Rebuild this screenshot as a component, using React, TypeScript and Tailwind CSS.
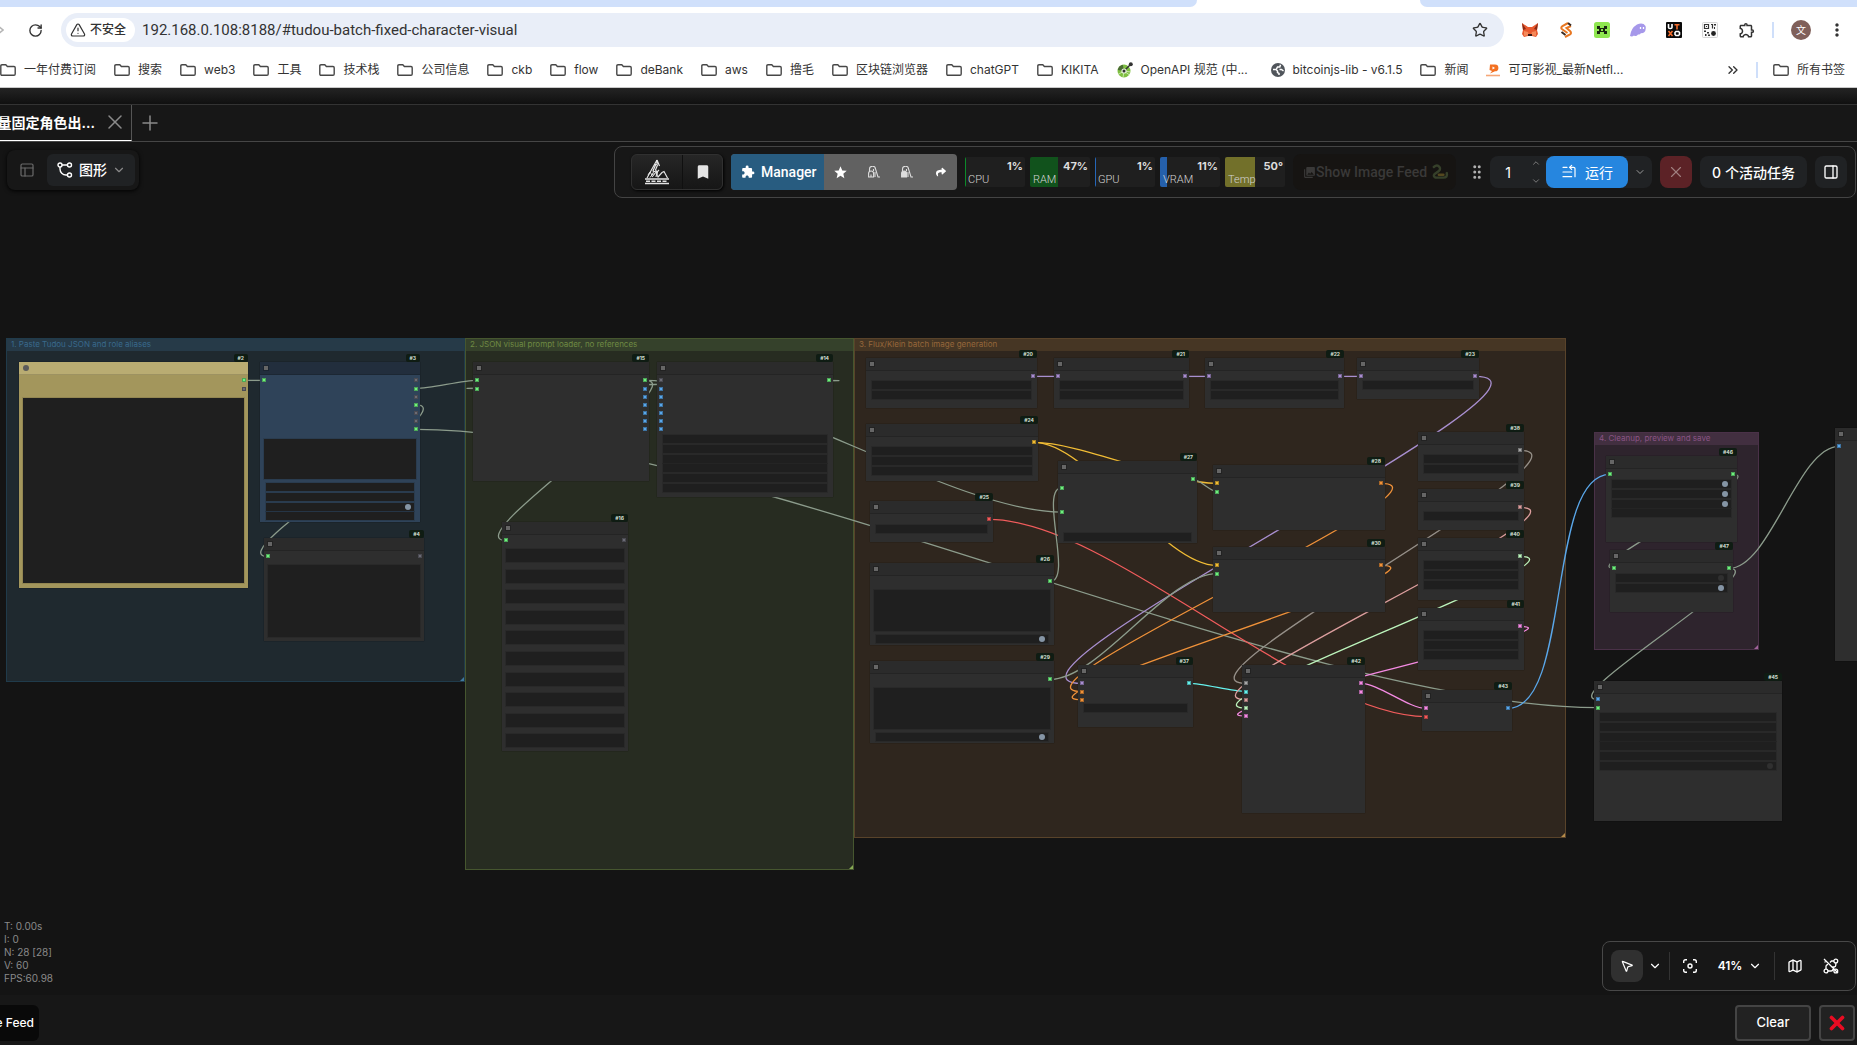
import type { ReactNode } from "react";
import {
  ChevronDown,
  ChevronUp,
  ChevronsRight,
  GripVertical,
  ListStart,
  Map as MapIcon,
  MousePointer2,
  PanelRight,
  PanelsTopLeft,
  Plus,
  RotateCw,
  Star,
  TriangleAlert,
  X,
} from "lucide-react";
import {
  MdBookmark,
  MdExtension,
  MdMoreVert,
  MdOutlineExtension,
  MdPhotoLibrary,
  MdStar,
} from "react-icons/md";
import { FaShare } from "react-icons/fa";

/* ---------- graph data ---------- */

// canvas coordinates are window coordinates, the canvas itself starts below the tabs
const ORIGIN_Y = 142;
const SLOT_PITCH = 8.17;
const WIDGET_PITCH = 9.8;
const TITLE_HEIGHT = 12;

const GREEN = "#6ff07f";
const GRAY = "#6b6b75";
const BLUE = "#5aa7ea";
const PURPLE = "#a98fd0";
const YELLOW = "#f2bd35";
const ORANGE = "#f0923a";
const RED = "#f25c5c";
const SIGMA = "#a8a8a8";
const PINK = "#dd9f9f";
const MINT = "#bdf5bd";
const MAGENTA = "#f58be4";
const CYAN = "#66f2ee";
const STRING_LINK = "#8c9c8c";

type Slot = string | null;

type GraphNode = {
  id: number;
  x: number;
  y: number;
  w: number;
  h: number;
  inputs?: Slot[];
  outputs?: Slot[];
  widgets?: number;
  widgetsTop?: number;
  toggles?: Record<number, boolean>;
  areas?: { top: number; height: number }[];
  theme?: "default" | "blue" | "yellow";
  hideBadge?: boolean;
};

const nodes: GraphNode[] = [
  { id: 2, x: 19, y: 362, w: 229, h: 226, outputs: [GREEN, GRAY], areas: [{ top: 36, height: 185 }], theme: "yellow" },
  {
    id: 3, x: 260, y: 362, w: 160, h: 160, inputs: [GREEN],
    outputs: [GRAY, GREEN, GRAY, GREEN, GRAY, GRAY, GREEN],
    areas: [{ top: 77, height: 40 }], widgets: 4, widgetsTop: 121, toggles: { 2: true }, theme: "blue",
  },
  { id: 4, x: 264, y: 538, w: 160, h: 103, inputs: [GREEN], outputs: [GRAY], areas: [{ top: 27, height: 72 }] },
  { id: 15, x: 473, y: 362, w: 176, h: 119, inputs: [GREEN, GREEN], outputs: [GREEN, BLUE, BLUE, BLUE, BLUE, BLUE, BLUE] },
  { id: 14, x: 657, y: 362, w: 176, h: 135, inputs: [GRAY, BLUE, BLUE, BLUE, BLUE, BLUE, BLUE], outputs: [GREEN], widgets: 6, widgetsTop: 73 },
  {
    id: 16, x: 502, y: 522, w: 126, h: 229, inputs: [GREEN], outputs: [GRAY],
    areas: Array.from({ length: 10 }, (_, i) => ({ top: Math.round(27 + i * 20.6), height: 13 })),
  },
  { id: 20, x: 866, y: 358, w: 171, h: 50, outputs: [PURPLE], widgets: 2 },
  { id: 21, x: 1054, y: 358, w: 135, h: 50, inputs: [PURPLE], outputs: [PURPLE], widgets: 2 },
  { id: 22, x: 1205, y: 358, w: 139, h: 50, inputs: [PURPLE], outputs: [PURPLE], widgets: 2 },
  { id: 23, x: 1357, y: 358, w: 122, h: 41, inputs: [PURPLE], outputs: [PURPLE], widgets: 1 },
  { id: 24, x: 866, y: 424, w: 172, h: 57, outputs: [YELLOW], widgets: 3 },
  { id: 25, x: 870, y: 501, w: 123, h: 41, outputs: [RED], widgets: 1, widgetsTop: 24 },
  { id: 26, x: 870, y: 563, w: 184, h: 82, outputs: [GREEN], areas: [{ top: 27, height: 41 }], widgets: 1, widgetsTop: 72, toggles: { 0: true } },
  { id: 29, x: 870, y: 661, w: 184, h: 82, outputs: [GREEN], areas: [{ top: 27, height: 41 }], widgets: 1, widgetsTop: 72, toggles: { 0: true } },
  { id: 27, x: 1058, y: 461, w: 139, h: 82, inputs: [null, GREEN, null, null, GREEN], outputs: [GREEN], widgets: 1, widgetsTop: 72 },
  { id: 37, x: 1078, y: 665, w: 115, h: 62, inputs: [PURPLE, ORANGE, ORANGE], outputs: [CYAN], widgets: 1, widgetsTop: 39 },
  { id: 28, x: 1213, y: 465, w: 172, h: 65, inputs: [YELLOW, GREEN], outputs: [ORANGE] },
  { id: 30, x: 1213, y: 547, w: 172, h: 65, inputs: [YELLOW, GREEN], outputs: [ORANGE] },
  { id: 38, x: 1418, y: 432, w: 106, h: 49, outputs: [SIGMA], widgets: 2 },
  { id: 39, x: 1418, y: 489, w: 106, h: 41, outputs: [PINK], widgets: 1 },
  { id: 40, x: 1418, y: 538, w: 106, h: 62, outputs: [MINT], widgets: 3 },
  { id: 41, x: 1418, y: 608, w: 106, h: 62, outputs: [MAGENTA], widgets: 3 },
  { id: 42, x: 1242, y: 665, w: 123, h: 148, inputs: [SIGMA, CYAN, PINK, MINT, MAGENTA], outputs: [MAGENTA, MAGENTA] },
  { id: 43, x: 1422, y: 690, w: 90, h: 41, inputs: [MAGENTA, RED], outputs: [BLUE] },
  { id: 46, x: 1606, y: 456, w: 131, h: 86, inputs: [GREEN], outputs: [GREEN], widgets: 4, widgetsTop: 24, toggles: { 0: true, 1: true, 2: true } },
  { id: 47, x: 1610, y: 550, w: 123, h: 62, inputs: [GREEN], outputs: [GREEN], widgets: 2, widgetsTop: 24, toggles: { 0: false, 1: true } },
  { id: 45, x: 1594, y: 681, w: 188, h: 140, inputs: [BLUE, GREEN], widgets: 6, widgetsTop: 32, toggles: { 5: false } },
  { id: 48, x: 1835, y: 428, w: 170, h: 233, inputs: [BLUE], hideBadge: true },
];

// [from node, output, to node, input, colour]
const links: [number, number, number, number, string][] = [
  [2, 0, 3, 0, STRING_LINK],
  [3, 1, 15, 0, STRING_LINK],
  [3, 3, 4, 0, STRING_LINK],
  [3, 6, 45, 1, STRING_LINK],
  [15, 0, 16, 0, STRING_LINK],
  [15, 0, 27, 4, STRING_LINK],
  [14, 0, 15, 1, STRING_LINK],
  [20, 0, 21, 0, PURPLE],
  [21, 0, 22, 0, PURPLE],
  [22, 0, 23, 0, PURPLE],
  [23, 0, 37, 0, PURPLE],
  [24, 0, 28, 0, YELLOW],
  [24, 0, 30, 0, YELLOW],
  [25, 0, 43, 1, RED],
  [26, 0, 27, 1, STRING_LINK],
  [29, 0, 30, 1, STRING_LINK],
  [27, 0, 28, 1, STRING_LINK],
  [28, 0, 37, 1, ORANGE],
  [30, 0, 37, 2, ORANGE],
  [38, 0, 42, 0, "#969089"],
  [37, 0, 42, 1, CYAN],
  [39, 0, 42, 2, PINK],
  [40, 0, 42, 3, MINT],
  [41, 0, 42, 4, MAGENTA],
  [42, 0, 43, 0, MAGENTA],
  [43, 0, 46, 0, BLUE],
  [46, 0, 47, 0, STRING_LINK],
  [47, 0, 48, 0, STRING_LINK],
  [47, 0, 45, 0, STRING_LINK],
];

const groups = [
  { title: "1. Paste Tudou JSON and role aliases", x: 6, y: 338, w: 459, h: 344, box: "border-[#203b4b] bg-[#1f292f]", head: "bg-[#263a48] text-[#39698c]", corner: "#3f789e" },
  { title: "2. JSON visual prompt loader, no references", x: 465, y: 338, w: 389, h: 532, box: "border-[#46562f] bg-[#272c21]", head: "bg-[#35412b] text-[#6e8a43]", corner: "#88aa55" },
  { title: "3. Flux/Klein batch image generation", x: 854, y: 338, w: 712, h: 500, box: "border-[#59432a] bg-[#2f261e]", head: "bg-[#463624] text-[#96673b]", corner: "#b58b4a" },
  { title: "4. Cleanup, preview and save", x: 1594, y: 432, w: 165, h: 218, box: "border-[#4a3148] bg-[#2e242d]", head: "bg-[#422f40] text-[#8a5485]", corner: "#a1639b" },
];

const themes = {
  default: { body: "bg-[#2e2e2e]", title: "bg-[#2b2b2b]" },
  blue: { body: "bg-[#2f4359]", title: "bg-[#222e3d]" },
  yellow: { body: "bg-[#a3965c]", title: "bg-[#b9ac72]" },
};

const slotY = (node: GraphNode, index: number) => node.y + 18.4 + index * SLOT_PITCH;

function linkPath(from: number, output: number, to: number, input: number) {
  const a = nodes.find((n) => n.id === from)!;
  const b = nodes.find((n) => n.id === to)!;
  const x1 = a.x + a.w - 4;
  const y1 = slotY(a, output);
  const x2 = b.x + 4;
  const y2 = slotY(b, input);
  const bend = Math.hypot(x2 - x1, y2 - y1) * 0.25;
  return `M${x1} ${y1}C${x1 + bend} ${y1} ${x2 - bend} ${y2} ${x2} ${y2}`;
}

/* ---------- graph ---------- */

function SlotDot({ color, left, top }: { color: string; left: number; top: number }) {
  return (
    <span
      className="absolute size-1 border border-black/30"
      style={{ left, top, backgroundColor: color }}
    />
  );
}

function NodeBox({ node }: { node: GraphNode }) {
  const theme = themes[node.theme ?? "default"];
  return (
    <div
      className={`absolute shadow-[0_0_1px_rgba(0,0,0,0.6)] ${theme.body}`}
      style={{ left: node.x, top: node.y - ORIGIN_Y, width: node.w, height: node.h }}
    >
      <div
        className={`flex items-center border-b border-black/15 pl-1 ${theme.title}`}
        style={{ height: TITLE_HEIGHT + 1 }}
      >
        <span
          className={
            node.theme === "yellow"
              ? "size-[6px] rounded-full bg-[#5b5b5b]"
              : "size-1 bg-[#666] outline outline-black/20"
          }
        />
      </div>
      {!node.hideBadge && (
        <span className="absolute right-0 bottom-full rounded-[2px] bg-[#0f1c13] px-1 text-[5px] leading-[8px] font-bold text-[#d8e0d8]">
          #{node.id}
        </span>
      )}
      {node.inputs?.map(
        (color, i) => color && <SlotDot key={i} color={color} left={2} top={Math.round(slotY(node, i) - node.y - 2)} />,
      )}
      {node.outputs?.map(
        (color, i) =>
          color && <SlotDot key={i} color={color} left={node.w - 6} top={Math.round(slotY(node, i) - node.y - 2)} />,
      )}
      {node.areas?.map((area) => (
        <div
          key={area.top}
          className="absolute inset-x-1 bg-[#1f1f1f] outline outline-black/10"
          style={{ top: area.top, height: area.height }}
        />
      ))}
      {Array.from({ length: node.widgets ?? 0 }, (_, i) => (
        <div
          key={i}
          className="absolute inset-x-[6px] flex h-2 items-center justify-end bg-[#1f1f1f] pr-[3px] outline outline-black/10"
          style={{ top: Math.round((node.widgetsTop ?? 23) + i * WIDGET_PITCH) }}
        >
          {node.toggles && i in node.toggles && (
            <span className={`size-[6px] rounded-full ${node.toggles[i] ? "bg-[#8595a5]" : "bg-[#303030]"}`} />
          )}
        </div>
      ))}
    </div>
  );
}

function Graph() {
  return (
    <div className="absolute inset-0 overflow-hidden">
      {groups.map((g) => (
        <div
          key={g.title}
          className={`absolute border ${g.box}`}
          style={{ left: g.x, top: g.y - ORIGIN_Y, width: g.w, height: g.h }}
        >
          <div className={`h-3 pl-1 text-[8px] leading-[10px] whitespace-nowrap ${g.head}`}>{g.title}</div>
          <svg className="absolute right-0 bottom-0 size-1" viewBox="0 0 4 4">
            <path d="M4 0v4H0z" fill={g.corner} />
          </svg>
        </div>
      ))}
      <svg className="absolute inset-0 h-full w-full" fill="none" strokeWidth="1.3">
        <g transform={`translate(0 ${-ORIGIN_Y})`}>
          {links.map(([from, output, to, input, color]) => (
            <path key={`${from}-${output}-${to}-${input}`} d={linkPath(from, output, to, input)} stroke={color} />
          ))}
        </g>
      </svg>
      {nodes.map((node) => (
        <NodeBox key={node.id} node={node} />
      ))}
    </div>
  );
}

/* ---------- icons ---------- */

function FolderIcon() {
  return (
    <svg className="h-3 w-4 shrink-0" viewBox="0 0 16 12" fill="none" stroke="#474747" strokeWidth="1.4">
      <path d="M.8 10V2Q.8.8 2 .8h3.800l1.600 1.700H14q1.200 0 1.200 1.200V10q0 1.200-1.200 1.200H2Q.8 11.200.8 10z" />
    </svg>
  );
}

function OpenApiIcon() {
  return (
    <svg className="size-4 shrink-0" viewBox="0 0 16 16">
      <circle cx="7" cy="9" r="5" fill="#7fbf42" stroke="#7fbf42" strokeWidth="3" />
      <path d="M.8 8a6.500 6.500 0 0 1 5-5.300L7 9z" fill="#4b6b35" />
      <path d="M7 9L1 12.500M7 9l-1 6.500M7 9l5.500 4M7 9l6.500 1" stroke="#d9efc4" strokeWidth=".8" />
      <path d="M7 9l6.500-6.500" stroke="#333" strokeWidth="1.500" />
      <circle cx="7" cy="9" r="2.600" fill="#e6f3da" />
      <circle cx="7" cy="9" r="1.500" fill="#333" />
      <circle cx="13.800" cy="2.200" r="2" fill="#333" />
    </svg>
  );
}

function GlobeIcon() {
  return (
    <svg className="size-[14px] shrink-0" viewBox="0 0 14 14">
      <circle cx="7" cy="7" r="7" fill="#50555b" />
      <path
        d="M2 6.500h3l1.500 1.500v1.500l1.500 1v1.500M9.500 1.800L8.800 4H6.500L5.500 5.800M8.500 6.500h2l2 1.500"
        fill="none"
        stroke="#fff"
        strokeWidth="1.500"
      />
    </svg>
  );
}

function KekeIcon() {
  return (
    <svg className="size-[14px] shrink-0" viewBox="0 0 14 14">
      <path d="M4 1.500h5a3.300 3.300 0 0 1 0 6.800L4 10.500 6 8 3.500 7z" fill="#f37021" />
      <path d="M6.500 3.500l2.500 1.500-2.500 1.500z" fill="#fff" />
      <path d="M0 12.500h14" stroke="#f6a778" strokeWidth="1.600" />
    </svg>
  );
}

function WorkflowIcon() {
  return (
    <svg className="size-4" viewBox="0 0 16 16" fill="none" stroke="currentColor" strokeWidth="1.400">
      <circle cx="3" cy="3" r="2" />
      <circle cx="12.500" cy="3" r="2" />
      <circle cx="12.500" cy="13" r="2" />
      <path d="M5 3h5.500M3 5v2a6 6 0 0 0 6 6h1.500" />
    </svg>
  );
}

function HiddenLinksIcon() {
  return (
    <svg className="size-4" viewBox="0 0 16 16" fill="none" stroke="currentColor" strokeWidth="1.300">
      <circle cx="3" cy="13" r="1.900" />
      <circle cx="12.800" cy="3" r="1.900" />
      <circle cx="12.800" cy="13" r="1.900" />
      <path d="M1 1l14 14M11 3H8.500L7 4.500M3 11V8.500a2 2 0 0 1 2-2M5 13h3a2 2 0 0 0 2-2M2 4.500v-1M12.800 5v2a2 2 0 0 1-1.500 2H9" />
    </svg>
  );
}

function FocusIcon() {
  return (
    <svg className="size-[14px]" viewBox="0 0 14 14" fill="none" stroke="currentColor" strokeWidth="1.400">
      <circle cx="7" cy="7" r="2" />
      <path d="M.7 4V2.500Q.7.7 2.500.7H4M10 .7h1.500q1.800 0 1.800 1.800V4M13.300 10v1.500q0 1.800-1.800 1.800H10M4 13.300H2.500Q.7 13.300.7 11.500V10" />
    </svg>
  );
}

function LogoIcon() {
  return (
    <svg className="h-[26px] w-6" viewBox="0 0 24 26" fill="none" stroke="#e4e4e4">
      <path d="M12 1L7.500 9 2 19M12 1l2.500 6M12 3v3M11 5l-3 7 3 1-4 5M12.500 6l-2 5 1.500 2-1 5" strokeWidth="1.200" />
      <path d="M14 11a5 5 0 0 0-1 7l4-4.500 2-1 3.500 6.500" strokeWidth="1.200" />
      <path d="M3 16l2-3 2 3 2-4M5 18.500l3-4" strokeWidth="1" />
      <path d="M0 20h24M0 24.500h24" strokeWidth="1.400" />
      <path d="M1 22.300h22" strokeWidth="1.600" strokeDasharray="4 1.500" />
    </svg>
  );
}

function VacuumIcon({ filled }: { filled?: boolean }) {
  return (
    <svg className="h-3 w-3" viewBox="0 0 12 12" fill="none" stroke="#dedede" strokeWidth="1.100">
      <path d="M1.500 5V3.500a3 3 0 0 1 6-.5L10 11h2" />
      <path d="M.6 11V7.500a2.500 2.500 0 0 1 5 0V11z" fill={filled ? "#dedede" : "none"} />
      <path d="M3 8.500v2.500M5.500 5v-2M7 6v5" />
    </svg>
  );
}

function SnakeIcon() {
  return (
    <svg className="size-[18px]" viewBox="0 0 16 16" fill="none" stroke="#36402a" strokeWidth="2.200" strokeLinecap="round">
      <path d="M2.500 3.500q3-2.500 5 0T5 8.500 4 13h7q4 0 3-4" />
      <path d="M7 10.500h4" stroke="#54481f" />
    </svg>
  );
}

const extensions: { name: string; icon: ReactNode }[] = [
  {
    name: "MetaMask",
    icon: (
      <>
        <path d="M0 1l6 4h4l6-4-1 7 1 4-2 3-4-1H6l-4 1-2-3 1-4z" fill="#e8592f" />
        <path d="M2 9l4 1 1 3-5 1zM14 9l-4 1-1 3 5 1z" fill="#f58a5b" />
        <path d="M0 1l4 6-3 1zM16 1l-4 6 3 1z" fill="#8b2b16" />
        <path d="M6 12h4v2H6z" fill="#3a1a18" />
      </>
    ),
  },
  {
    name: "Script wallet",
    icon: (
      <g fill="none">
        <path d="M10 1L4.500 4q-2.500 2 0 3.500l5 3.500" stroke="#e87722" strokeWidth="2" />
        <path d="M13 4L8.500 6l3.500 3q2 2 0 3.500L7 15" stroke="#e87722" strokeWidth="2" />
        <path d="M10 1l3 2.500M3.500 10l4 3" stroke="#3a2a22" strokeWidth="2" />
      </g>
    ),
  },
  {
    name: "Pixel",
    icon: (
      <>
        <rect width="16" height="16" rx="2.500" fill="#8fe650" />
        <path d="M3 4h3v2h4V4h3v3h-2v2h2v3h-3v-2H6v2H3V9h2V7H3z" fill="#182410" />
        <path d="M7 7h2v2H7z" fill="#8fe650" />
      </>
    ),
  },
  {
    name: "Phantom",
    icon: (
      <>
        <path d="M0 14Q1 6 7 2.500 13 0 15.500 4q1 4-1.500 6.500-2 1-3 .5-1 2-3 1.500-2 2.500-4 1-2 1.500-4 .5z" fill="#a698ea" />
        <path d="M10.500 5v2M13.500 5v2" stroke="#fff" strokeWidth="1.300" />
      </>
    ),
  },
  {
    name: "UTXO",
    icon: (
      <>
        <rect width="16" height="16" rx="1" fill="#0a0a0a" />
        <g fill="none" strokeWidth="1.600">
          <path d="M2.500 2v3.500q0 1 1.500 1h.5q1.500 0 1.500-1V2" stroke="#fff" />
          <path d="M8.500 2.800h5M11 3v4.500M2.500 9l4 5M6.500 9l-4 5" stroke="#f26b2b" />
          <path d="M10 9.500h2.500l1 1v2l-1 1H10l-1-1v-2z" stroke="#fff" />
        </g>
      </>
    ),
  },
  {
    name: "QR code",
    icon: (
      <>
        <rect x=".5" y=".5" width="15" height="15" rx="1" fill="#fafafa" stroke="#d5d5d5" />
        <path d="M2.500 2.500h4v4h-4zM9 2.500h1.500v4" fill="none" stroke="#333" strokeWidth="1.200" />
        <path d="M4 4h1v1H4zM12 2h2v1.500h-2zM12 5h1v2h-1zM2 8.500h2V10H2zM5 10h2v1.500H5zM3 12h1.500v2H3zM6 12.500h2V14H6z" fill="#333" />
        <circle cx="11.500" cy="11.500" r="2.400" fill="#222" />
      </>
    ),
  },
];

/* ---------- browser chrome ---------- */

const bookmarks: { label: string; icon?: ReactNode; width?: string }[] = [
  { label: "一年付费订阅" },
  { label: "搜索" },
  { label: "web3" },
  { label: "工具" },
  { label: "技术栈" },
  { label: "公司信息" },
  { label: "ckb" },
  { label: "flow" },
  { label: "deBank" },
  { label: "aws" },
  { label: "撸毛" },
  { label: "区块链浏览器" },
  { label: "chatGPT" },
  { label: "KIKITA" },
  { label: "OpenAPI 规范 (中...", icon: <OpenApiIcon />, width: "w-[136px]" },
  { label: "bitcoinjs-lib - v6.1.5", icon: <GlobeIcon /> },
  { label: "新闻" },
  { label: "可可影视_最新Netfl...", icon: <KekeIcon /> },
];

function TabStrip() {
  return (
    <div className="flex h-[7px] bg-white">
      <div className="flex-1 rounded-br-lg bg-[#d0e0fb]" />
      <div className="w-[223px]" />
      <div className="w-[437px] rounded-bl-lg bg-[#d0e0fb]" />
    </div>
  );
}

function AddressBar() {
  return (
    <div className="flex h-[46px] items-center bg-white pr-[10px] text-[#333]">
      <span className="w-7 shrink-0 overflow-hidden text-[#b5b5b5]">
        <svg className="h-3 w-1" viewBox="0 0 4 12" fill="none" stroke="currentColor" strokeWidth="1.500">
          <path d="M-3 1l6 5-6 5" />
        </svg>
      </span>
      <button aria-label="Reload" className="mr-[18px]">
        <RotateCw size={15} strokeWidth={2.200} />
      </button>
      <form className="flex h-[34px] flex-1 items-center rounded-full bg-[#e9eef8] pr-4 pl-[5px]">
        <button type="button" className="flex h-6 items-center gap-1 rounded-full bg-white pr-[9px] pl-1 text-[12px] font-medium">
          <TriangleAlert size={16} strokeWidth={1.800} />
          不安全
        </button>
        <input
          aria-label="Address"
          defaultValue="192.168.0.108:8188/#tudou-batch-fixed-character-visual"
          className="ml-[7px] min-w-0 flex-1 bg-transparent font-[Roboto] text-[15px] outline-none"
        />
        <button type="button" aria-label="Bookmark this page">
          <Star size={16} strokeWidth={2} />
        </button>
      </form>
      <div className="ml-[18px] flex items-center gap-5">
        {extensions.map((ext) => (
          <button key={ext.name} aria-label={ext.name}>
            <svg className="size-4" viewBox="0 0 16 16">
              {ext.icon}
            </svg>
          </button>
        ))}
        <button aria-label="Extensions">
          <MdOutlineExtension size={18} />
        </button>
      </div>
      <span className="mr-[17px] ml-4 h-4 w-[2px] bg-[#cfdffa]" />
      <button className="flex size-5 items-center justify-center rounded-full bg-[#80605a] text-[10px] text-white">
        文
      </button>
      <button aria-label="More" className="ml-4">
        <MdMoreVert size={20} />
      </button>
    </div>
  );
}

function BookmarksBar() {
  return (
    <nav className="flex h-[35px] items-center justify-between border-b border-[#c9c9c9] bg-white pr-3 text-[12px] whitespace-nowrap text-[#333]">
      <div className="flex items-center gap-[18px]">
        {bookmarks.map((b) => (
          <a key={b.label} href="#" className={`flex items-center gap-2 ${b.width ?? ""}`}>
            {b.icon ?? <FolderIcon />}
            {b.label}
          </a>
        ))}
      </div>
      <div className="flex items-center">
        <button aria-label="More bookmarks">
          <ChevronsRight size={16} />
        </button>
        <span className="mx-[15px] h-4 w-[2px] bg-[#cfdffa]" />
        <a href="#" className="flex items-center gap-2">
          <FolderIcon />
          所有书签
        </a>
      </div>
    </nav>
  );
}

/* ---------- app ---------- */

function WorkflowTabs() {
  return (
    <div>
      <div className="h-4 bg-linear-to-b from-[#242424] to-[#101010]" />
      <div className="flex h-[38px] border-y border-t-[#333] border-b-[#464646] bg-[#171717]">
        <div className="flex w-[132px] shrink-0 items-center justify-end overflow-hidden border-r border-b border-r-[#555] border-b-white pr-1 pb-px whitespace-nowrap">
          <span className="text-[14px] font-semibold text-white">量固定角色出...</span>
          <button aria-label="关闭" className="ml-2 text-[#8a8a8a]">
            <X size={24} strokeWidth={1.500} />
          </button>
        </div>
        <button aria-label="新建" className="ml-[6px] text-[#8a8a8a]">
          <Plus size={24} strokeWidth={1.500} />
        </button>
      </div>
    </div>
  );
}

const monitors = [
  { label: "CPU", value: "1%", fill: 1, color: "bg-[#0b8a2a]" },
  { label: "RAM", value: "47%", fill: 47, color: "bg-[#11521c]" },
  { label: "GPU", value: "1%", fill: 1, color: "bg-[#2566b8]" },
  { label: "VRAM", value: "11%", fill: 12, color: "bg-[#2560ab]" },
  { label: "Temp", value: "50°", fill: 50, color: "bg-[#72702a]" },
];

function Monitor({ label, value, fill, color }: (typeof monitors)[number]) {
  return (
    <div className="relative flex h-[30px] w-[60px] flex-col justify-between overflow-hidden rounded-[2px] bg-[#1f1f1f]">
      <div className={`absolute inset-y-0 left-0 min-w-px ${color}`} style={{ width: `${fill}%` }} />
      <span className="relative pt-[2px] pr-[2px] text-right text-[11px] leading-[14px] font-bold text-[#dcdcdc]">
        {value}
      </span>
      <span className="relative pb-[1px] pl-[3px] font-[Roboto] text-[11px] leading-[13px] font-light text-[#d4d4d4]">
        {label}
      </span>
    </div>
  );
}

function ActionBar() {
  return (
    <div className="flex h-[52px] items-center rounded-lg border border-[#444] bg-[#171717] pr-2 pl-4 text-white">
      <div className="flex h-9 overflow-hidden rounded-md border border-[#303030] bg-linear-to-b from-[#262626] to-[#161616] shadow-[1px_1px_3px_#000]">
        <button aria-label="Menu" className="flex w-[51px] items-center justify-center border-r border-[#101010]">
          <LogoIcon />
        </button>
        <button aria-label="Bookmark" className="flex w-[39px] items-center justify-center text-[#e4e4e4]">
          <MdBookmark size={18} />
        </button>
      </div>
      <div className="ml-2 flex h-9 overflow-hidden rounded bg-[#616161]">
        <button className="flex w-[93px] items-center gap-[6px] bg-[#285c80] pl-[10px] font-[Roboto] text-[14px] font-medium">
          <MdExtension size={14} />
          Manager
        </button>
        <button aria-label="Favorites" className="flex w-[33px] items-center justify-center">
          <MdStar size={15} />
        </button>
        <button aria-label="Unload models" className="flex w-[33px] items-center justify-center">
          <VacuumIcon />
        </button>
        <button aria-label="Free cache" className="flex w-[34px] items-center justify-center">
          <VacuumIcon filled />
        </button>
        <button aria-label="Share" className="flex w-[33px] items-center justify-center">
          <FaShare size={10} />
        </button>
      </div>
      <div className="ml-2 flex gap-[5px]">
        {monitors.map((m) => (
          <Monitor key={m.label} {...m} />
        ))}
      </div>
      <button className="ml-2 flex h-9 w-[163px] items-center rounded-lg bg-[#161412] pl-[10px] font-[Roboto] text-[14px] font-medium text-[#3a3938]">
        <MdPhotoLibrary size={13} />
        <span>Show Image Feed</span>
        <span className="ml-1">
          <SnakeIcon />
        </span>
      </button>
      <GripVertical size={18} className="mr-1 ml-3 text-[#b0b0b0]" />
      <div className="flex h-8 overflow-hidden rounded-lg bg-[#202224]">
        <input aria-label="Batch count" defaultValue="1" className="w-9 bg-transparent text-center text-[14px] outline-none" />
        <div className="flex w-5 flex-col items-center justify-between py-[2px] text-[#8a8a8a]">
          <button aria-label="Increase">
            <ChevronUp size={10} />
          </button>
          <button aria-label="Decrease">
            <ChevronDown size={10} />
          </button>
        </div>
        <button className="flex w-[82px] items-center justify-center gap-2 rounded-lg bg-[#2686df] text-[14px]">
          <ListStart size={16} strokeWidth={1.800} />
          运行
        </button>
        <button aria-label="Run options" className="flex w-6 items-center justify-center text-[#9a9a9a]">
          <ChevronDown size={12} />
        </button>
      </div>
      <button aria-label="Cancel" className="ml-2 flex size-8 items-center justify-center rounded-lg bg-[#5c2226] text-[#a08080]">
        <X size={18} strokeWidth={1.500} />
      </button>
      <button className="ml-2 flex h-8 w-[107px] items-center justify-center rounded-lg bg-[#202224] text-[14px] font-medium">
        0 个活动任务
      </button>
      <button aria-label="Toggle panel" className="ml-2 flex size-8 items-center justify-center rounded-lg bg-[#202224]">
        <PanelRight size={16} />
      </button>
    </div>
  );
}

function ModeSwitch() {
  return (
    <div className="mt-1 flex h-10 items-center gap-1 rounded-lg bg-[#171717] p-1 shadow-[0_1px_4px_#000]">
      <button aria-label="Sidebar" className="flex h-8 w-8 items-center justify-center text-[#6a6a6a]">
        <PanelsTopLeft size={16} strokeWidth={1.800} />
      </button>
      <button className="flex h-8 w-[88px] items-center rounded-md bg-[#202224] pl-[10px] text-[14px] leading-4 font-medium text-white">
        <WorkflowIcon />
        <span className="ml-[6px]">图形</span>
        <ChevronDown size={14} className="ml-[5px] text-[#8a8a8a]" />
      </button>
    </div>
  );
}

function ZoomBar() {
  return (
    <div className="flex h-[50px] items-center rounded-lg border border-[#484848] bg-[#171717] px-2 text-white">
      <button aria-label="Select" className="flex size-8 items-center justify-center rounded-lg bg-[#303030]">
        <MousePointer2 size={14} />
      </button>
      <button aria-label="Pointer options" className="flex w-6 justify-center">
        <ChevronDown size={14} />
      </button>
      <span className="ml-[2px] h-7 w-px bg-[#333]" />
      <button aria-label="Fit view" className="flex w-10 justify-center">
        <FocusIcon />
      </button>
      <button className="ml-[6px] flex items-center gap-1 text-[12px] font-semibold">
        <span className="w-7">41%</span>
        <ChevronDown size={14} />
      </button>
      <span className="ml-3 h-7 w-px bg-[#333]" />
      <button aria-label="Minimap" className="flex w-10 justify-center">
        <MapIcon size={16} />
      </button>
      <button aria-label="Hide links" className="flex w-8 justify-center">
        <HiddenLinksIcon />
      </button>
    </div>
  );
}

export default function App() {
  return (
    <div className="flex min-h-screen flex-col overflow-hidden bg-[#171717] font-[Inter,'Noto_Sans_CJK_SC',sans-serif]">
      <header>
        <TabStrip />
        <AddressBar />
        <BookmarksBar />
        <WorkflowTabs />
      </header>

      <main className="relative flex flex-1 flex-col justify-between bg-[#141414]">
        <Graph />
        <div className="relative flex items-start justify-between pt-1 pr-px pl-[7px]">
          <ModeSwitch />
          <ActionBar />
        </div>
        <div className="relative flex items-end justify-between pr-px pb-1 pl-1">
          <div className="pb-[6px] text-[10px] leading-[13px] text-[#8a8a8a]">
            <p>T: 0.00s</p>
            <p>I: 0</p>
            <p>N: 28 [28]</p>
            <p>V: 60</p>
            <p>FPS:60.98</p>
          </div>
          <ZoomBar />
        </div>
      </main>

      <footer className="flex h-[50px] items-center justify-between bg-[#171717] pt-[10px] pr-[2px] pb-1 text-white">
        <button className="flex h-9 w-[39px] items-center justify-end overflow-hidden rounded-r-md bg-[#090909] pr-[5px] text-[12px] font-medium whitespace-nowrap">
          e Feed
        </button>
        <div className="flex gap-2">
          <button className="h-9 w-[76px] rounded border-2 border-[#444] bg-[#222] text-[13px] font-medium">Clear</button>
          <button aria-label="Close feed" className="flex size-9 items-center justify-center rounded border-2 border-[#444] bg-[#222] text-[#ea0c22]">
            <X size={22} strokeWidth={4} />
          </button>
        </div>
      </footer>
    </div>
  );
}
